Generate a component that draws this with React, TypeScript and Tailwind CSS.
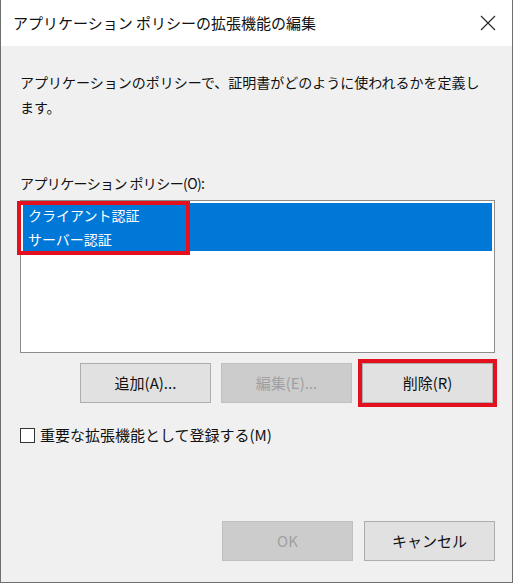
import React from 'react';

const font = { fontFamily: '"Noto Sans CJK JP", "Noto Sans", sans-serif' };

const Button = ({ label, disabled }: { label: string; disabled?: boolean }) => (
  <button
    className={
      disabled
        ? 'w-[131px] h-[40px] bg-[#cccccc] border border-[#bfbfbf] text-[#a0a0a0] text-[15px]'
        : 'w-[131px] h-[40px] bg-[#e1e1e1] border border-[#adadad] text-[#111] text-[15px]'
    }
  >
    {label}
  </button>
);

const App = () => {
  return (
    <div className="w-[514px] h-[584px] bg-white" style={font}>
      <div className="w-[513px] h-[583px] flex flex-col bg-[#f0f0f0] border-l border-r border-b border-[#6f6f6f]">
        {/* title bar */}
        <div className="h-[46px] bg-white flex items-center justify-between pl-[12px] pr-[16px]">
          <span className="text-[15px] text-[#111]">アプリケーション ポリシーの拡張機能の編集</span>
          <svg width="16" height="16" viewBox="0 0 16 16" className="text-[#222]">
            <path d="M1 1 L15 15 M15 1 L1 15" stroke="currentColor" strokeWidth="1.1" fill="none" />
          </svg>
        </div>

        <div className="flex flex-col pl-[19px] pr-[17px] pt-[24px] text-[#111]">
          <p className="text-[14px] leading-[25px]">
            アプリケーションのポリシーで、証明書がどのように使われるかを定義し
            <br />
            ます。
          </p>

          <div className="mt-[53px] text-[14px] leading-[20px] tracking-[-0.6px]">アプリケーション&nbsp;ポリシー(O):</div>

          <div className="relative mt-[7px] h-[153px] border border-[#8c8c8c] bg-white p-[2px]">
            <div className="bg-[#0078d7] text-white text-[14px]">
              <div className="h-[24px] leading-[24px] pl-[5px]">クライアント認証</div>
              <div className="h-[24px] leading-[24px] pl-[5px]">サーバー認証</div>
            </div>
            <div className="absolute left-[-4px] top-[0px] w-[173px] h-[54px] border-[4px] border-[#e3101d]" />
          </div>

          <div className="mt-[10px] flex justify-end gap-[10px] pr-[2px]">
            <Button label="追加(A)..." />
            <Button label="編集(E)..." disabled />
            <div className="relative">
              <Button label="削除(R)" />
              <div className="absolute left-[-4px] top-[-4px] w-[139px] h-[48px] border-[4px] border-[#e3101d]" />
            </div>
          </div>

          <label className="mt-[22px] flex items-center gap-[5px] h-[20px] text-[15px]">
            <span className="w-[15px] h-[15px] border border-[#333] bg-white" />
            重要な拡張機能として登録する(M)
          </label>

          <div className="mt-[76px] flex justify-end gap-[11px] pr-[0px]">
            <Button label="OK" disabled />
            <Button label="キャンセル" />
          </div>
        </div>
      </div>
    </div>
  );
};

export default App;
